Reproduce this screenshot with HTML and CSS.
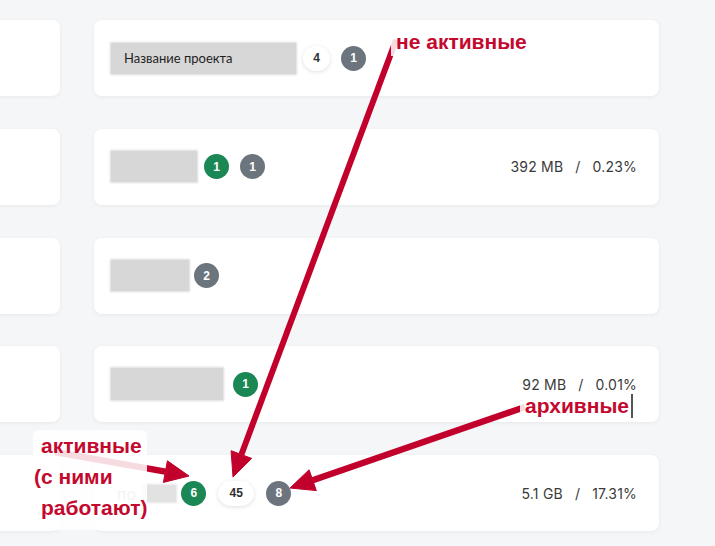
FILE: index.html
```html
<!DOCTYPE html>
<html lang="ru">
<head>
<meta charset="utf-8">
<title>Проекты</title>
<link rel="stylesheet" href="styles.css">
</head>
<body>
<div class="rows">
  <div class="row">
    <div class="card card-left"></div>
    <div class="card card-main">
      <div class="name">
        <span class="mask mask-1"><span class="name-text">Название проекта</span></span>
        <div class="badges">
          <span class="badge badge-white">4</span>
          <span class="badge badge-gray">1</span>
        </div>
      </div>
    </div>
  </div>
  <div class="row">
    <div class="card card-left"></div>
    <div class="card card-main">
      <div class="name">
        <span class="mask mask-2"></span>
        <div class="badges">
          <span class="badge badge-green">1</span>
          <span class="badge badge-gray">1</span>
        </div>
      </div>
      <div class="stats"><span>392 MB</span><span class="sep">/</span><span>0.23%</span></div>
    </div>
  </div>
  <div class="row">
    <div class="card card-left"></div>
    <div class="card card-main">
      <div class="name">
        <span class="mask mask-3"></span>
        <div class="badges badges-tight">
          <span class="badge badge-gray">2</span>
        </div>
      </div>
    </div>
  </div>
  <div class="row">
    <div class="card card-left"></div>
    <div class="card card-main">
      <div class="name">
        <span class="mask mask-4"></span>
        <div class="badges badges-wide">
          <span class="badge badge-green">1</span>
        </div>
      </div>
      <div class="stats"><span>92 MB</span><span class="sep">/</span><span>0.01%</span></div>
    </div>
  </div>
  <div class="row">
    <div class="card card-left"></div>
    <div class="card card-main">
      <div class="name">
        <span class="faded">по</span><span class="mask mask-5"></span>
        <div class="badges badges-tight">
          <span class="badge badge-green">6</span>
          <span class="badge badge-white badge-wide">45</span>
          <span class="badge badge-gray">8</span>
        </div>
      </div>
      <div class="stats"><span>5.1 GB</span><span class="sep">/</span><span>17.31%</span></div>
    </div>
  </div>
</div>

<svg class="arrows" width="715" height="546" viewBox="0 0 715 546">
  <g fill="#c1002c" stroke="#c1002c">
    <line x1="396" y1="40" x2="241.4" y2="454.5" stroke-width="6"/>
    <polygon points="233,477 251.7,458.4 231.1,450.7" stroke-width="1"/>
    <line x1="525" y1="407" x2="312.7" y2="480.2" stroke-width="6.5"/>
    <polygon points="290,488 316.3,490.6 309.1,469.8" stroke-width="1"/>
    <line x1="55" y1="452" x2="165.4" y2="471.6" stroke-width="6.5"/>
    <polygon points="189,476 163.4,482.4 167.4,460.8" stroke-width="1"/>
  </g>
</svg>

<div class="note note-top">не активные</div>
<div class="note note-archive">архивные<span class="caret"></span></div>
<div class="note note-active">
  <div>активные</div>
  <div class="hang">(с ними</div>
  <div>работают)</div>
</div>
</body>
</html>
```

FILE: styles.css
```css
html, body {
  margin: 0;
  padding: 0;
}

body {
  position: relative;
  width: 715px;
  height: 546px;
  overflow: hidden;
  background: #f5f6f8;
  font-family: Lato, "Liberation Sans", sans-serif;
}

.rows {
  display: flex;
  flex-direction: column;
  gap: 32.75px;
  padding-top: 20px;
}

.row {
  display: flex;
  gap: 34px;
  height: 76px;
}

.card {
  background: #fff;
  border-radius: 8px;
  box-shadow: 0 1px 4px rgba(0, 0, 0, 0.06);
}

.card-left {
  width: 200px;
  margin-left: -140px;
  flex: none;
}

.card-main {
  width: 565px;
  flex: none;
  box-sizing: border-box;
  padding: 0 22px 0 17px;
  display: flex;
  align-items: center;
  justify-content: space-between;
}

.name {
  display: flex;
  align-items: center;
}

.mask {
  display: flex;
  align-items: center;
  height: 31px;
  background: #d7d7d7;
  box-shadow: 0 0 2px 1px #dcdcdc;
}

.mask-1 { width: 185px; }
.mask-2 { width: 86px; }
.mask-3 { width: 78px; }
.mask-4 { width: 112px; height: 32px; }
.mask-5 { width: 33px; height: 17px; background: #e2e2e2; box-shadow: 0 0 2px 1px #e6e6e6; }

.name-text {
  padding-left: 13px;
  font-size: 13px;
  color: #1e1e1e;
}

.faded {
  font-size: 17px;
  color: #a9a9a9;
  margin: 0 7px 0 6px;
  filter: blur(0.4px);
}

.badges {
  display: flex;
  align-items: center;
  gap: 11px;
  margin-left: 7px;
}

.badges-tight { margin-left: 5px; gap: 12px; }
.badges-wide { margin-left: 10px; }

.badge {
  box-sizing: border-box;
  min-width: 25px;
  height: 25px;
  padding: 0 7px;
  border-radius: 13px;
  display: flex;
  align-items: center;
  justify-content: center;
  font-family: "Liberation Sans", sans-serif;
  font-weight: bold;
  font-size: 12px;
  color: #fff;
}

.badge-green { background: #1a8754; }
.badge-gray { background: #6c757d; }

.badge-white {
  min-width: 27px;
  background: #fff;
  color: #2f2f2f;
  box-shadow: 0 1px 4px rgba(0, 0, 0, 0.13);
}

.badge-wide { min-width: 36px; }

.stats {
  display: flex;
  align-items: center;
  font-family: Inter, "Liberation Sans", sans-serif;
  font-size: 14px;
  letter-spacing: 0.2px;
  color: #3a3a3a;
}

.sep {
  margin: 0 12px;
}

.arrows {
  position: absolute;
  left: 0;
  top: 0;
}

.note {
  position: absolute;
  background: rgba(255, 255, 255, 0.86);
  color: #c4092f;
  font-family: "Liberation Sans", "Helvetica Neue", sans-serif;
  font-weight: bold;
  font-size: 21px;
  line-height: 28px;
  white-space: nowrap;
}

.note-top {
  left: 391px;
  top: 28px;
  padding: 0 5px;
}

.note-archive {
  left: 520px;
  top: 392px;
  padding: 0 0 0 5px;
  display: flex;
  align-items: center;
}

.caret {
  width: 1.5px;
  height: 24px;
  margin-left: 2px;
  background: #555;
}

.note-active {
  left: 33px;
  top: 430px;
  height: 100px;
  padding: 0 0 0 8px;
  line-height: 31px;
  border-radius: 6px;
}

.hang {
  margin-left: -7px;
}
```
